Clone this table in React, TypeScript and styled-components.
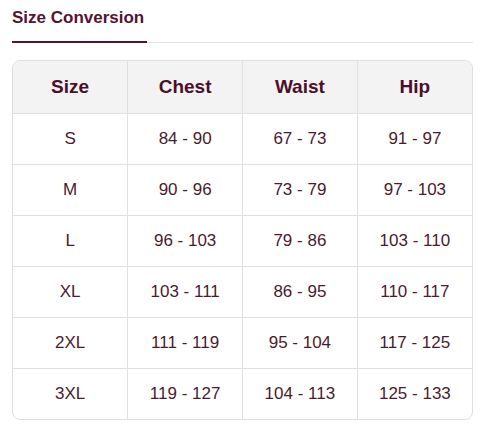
import styled, { createGlobalStyle } from "styled-components";

const rows = [
    ["S", "84 - 90", "67 - 73", "91 - 97"],
    ["M", "90 - 96", "73 - 79", "97 - 103"],
    ["L", "96 - 103", "79 - 86", "103 - 110"],
    ["XL", "103 - 111", "86 - 95", "110 - 117"],
    ["2XL", "111 - 119", "95 - 104", "117 - 125"],
    ["3XL", "119 - 127", "104 - 113", "125 - 133"],
];

const GlobalStyle = createGlobalStyle`
  body {
    margin: 0;
    background: #ffffff;
    font-family: "Liberation Sans", Arial, sans-serif;
  }
`

export default function App() {
    return (
        <>
            <GlobalStyle />
            <Page>
                <TabBar>
                    <Tab>Size Conversion</Tab>
                </TabBar>
                <TableCard>
                    <Table>
                        <thead>
                            <tr>
                                {["Size", "Chest", "Waist", "Hip"].map((h) => (
                                    <Th key={h}>{h}</Th>
                                ))}
                            </tr>
                        </thead>
                        <tbody>
                            {rows.map((row) => (
                                <tr key={row[0]}>
                                    {row.map((cell, i) => (
                                        <Td key={i}>{cell}</Td>
                                    ))}
                                </tr>
                            ))}
                        </tbody>
                    </Table>
                </TableCard>
            </Page>
        </>
    )
}

const Page = styled.div`
  padding: 8px 7px 0 12px;
  width: 480px;
  box-sizing: border-box;
`

const TabBar = styled.div`
  display: flex;
  border-bottom: 1px solid #e6e6e6;
  margin-bottom: 17px;
`

const Tab = styled.div`
  color: #561231;
  font-size: 17px;
  font-weight: 700;
  line-height: 20px;
  padding: 0 0 13px 0;
  width: 135px;
  border-bottom: 2px solid #561231;
  margin-bottom: -1px;
`

const TableCard = styled.div`
  border: 1px solid #dedede;
  border-radius: 8px;
  overflow: hidden;
  width: 461px;
  box-sizing: border-box;
`

const Table = styled.table`
  width: 100%;
  border-collapse: collapse;
  table-layout: fixed;

  tr:last-child td {
    border-bottom: none;
  }

  th:last-child, td:last-child {
    border-right: none;
  }
`

const Th = styled.th`
  background: #f3f3f3;
  color: #4c0e28;
  font-size: 19px;
  font-weight: 700;
  height: 52px;
  padding: 0;
  text-align: center;
  border-right: 1px solid #e0e0e0;
  border-bottom: 1px solid #e0e0e0;
`

const Td = styled.td`
  color: #4a1b2d;
  font-size: 17px;
  height: 50px;
  padding: 0;
  text-align: center;
  border-right: 1px solid #e0e0e0;
  border-bottom: 1px solid #e0e0e0;
`
